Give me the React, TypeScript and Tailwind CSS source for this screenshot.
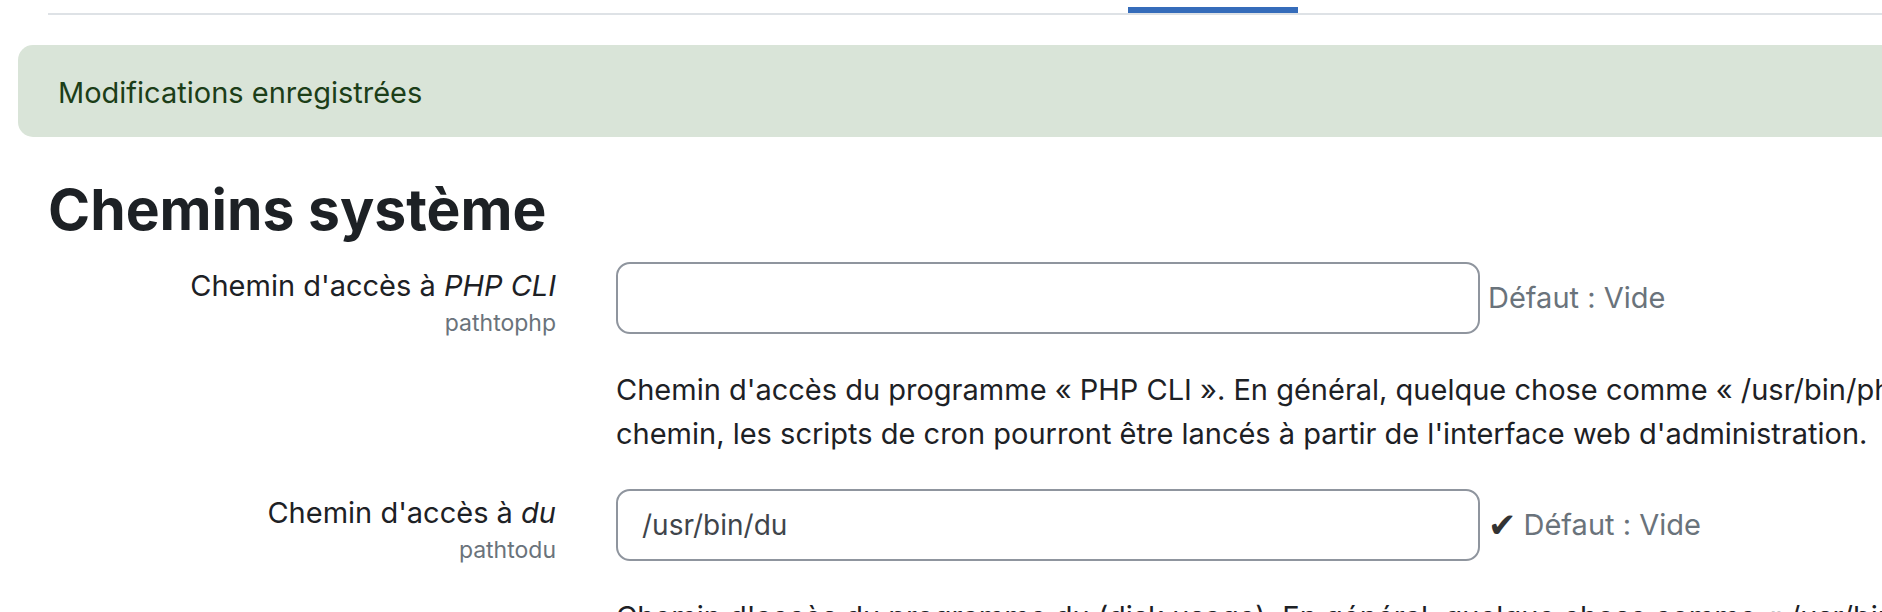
import React from "react";

const font = { fontFamily: "Inter, 'Noto Sans', sans-serif" };

function Row({
  label,
  code,
  value,
  check,
  desc,
}: {
  label: React.ReactNode;
  code: string;
  value: string;
  check?: boolean;
  desc: React.ReactNode;
}) {
  return (
    <div className="flex flex-col">
      <div className="flex items-start">
        <div className="w-[556px] shrink-0 text-right pt-[3px]">
          <div className="text-[29px] leading-[42px] text-[#1d2125]">{label}</div>
          <div className="text-[23px] leading-[32px] text-[#6a737b]">{code}</div>
        </div>
        <div className="ml-[60px] flex items-center">
          <div className="w-[864px] h-[72px] border-2 border-[#8f959e] rounded-[14px] flex items-center px-[24px] text-[28px] text-[#3f454b]">
            {value}
          </div>
          <div className="ml-[8px] text-[29px] text-[#6a737b] whitespace-nowrap flex items-center [font-feature-settings:'calt'_0]">
            {check && (
              <span className="text-[#333333] mr-[7px] text-[34px] leading-none" style={{ fontFamily: "'DejaVu Sans', sans-serif" }}>
                ✔
              </span>
            )}
            Défaut : Vide
          </div>
        </div>
      </div>
      <div className="ml-[616px] mt-[29px] text-[29px] leading-[44px] text-[#1d2125] whitespace-nowrap">
        {desc}
      </div>
    </div>
  );
}

export default function App() {
  return (
    <div className="w-[1882px] h-[612px] overflow-hidden bg-white" style={font}>
      <div className="ml-[48px] h-[15px] border-b-2 border-[#dee2e6] flex items-end">
        <div className="ml-[1080px] w-[170px] h-[6px] bg-[#356cba]" />
      </div>
      <div className="ml-[18px] mt-[30px] w-[1900px] h-[92px] rounded-[15px] bg-[#d9e4d8] flex items-center pl-[40px] pt-[3px]">
        <span className="text-[29px] leading-[44px] text-[#1c3e18]">Modifications enregistrées</span>
      </div>
      <div>
        <h2 className="ml-[48px] mt-[39px] text-[57px] leading-[67px] font-bold text-[#1d2125]">Chemins système</h2>
        <div className="mt-[19px]">
          <Row
            label={
              <>
                Chemin d'accès à <em>PHP CLI</em>
              </>
            }
            code="pathtophp"
            value=""
            desc={
              <>
                Chemin d'accès du programme « PHP CLI ». En général, quelque chose comme « /usr/bin/php ». Si ce champ contient un
                <br />
                chemin, les scripts de cron pourront être lancés à partir de l'interface web d'administration.
              </>
            }
          />
          <div className="mt-[33px]">
            <Row
              label={
                <>
                  Chemin d'accès à <em>du</em>
                </>
              }
              code="pathtodu"
              value="/usr/bin/du"
              check
              desc={<>Chemin d'accès du programme du (disk usage). En général, quelque chose comme « /usr/bin/du ».</>}
            />
          </div>
        </div>
      </div>
    </div>
  );
}
